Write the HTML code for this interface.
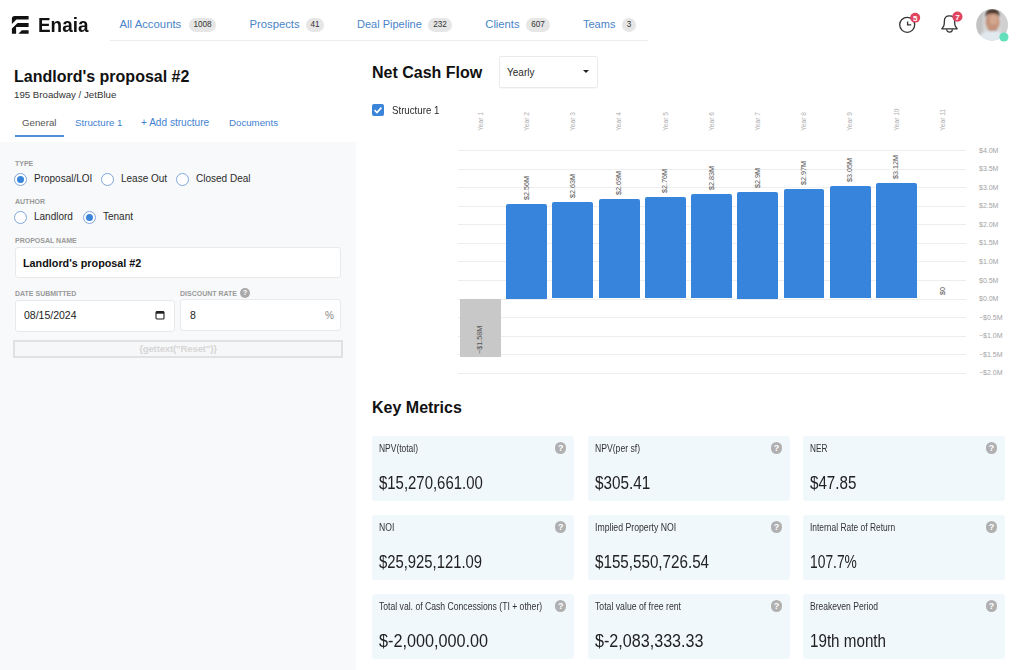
<!DOCTYPE html>
<html><head><meta charset="utf-8">
<style>
*{box-sizing:border-box;margin:0;padding:0}
html,body{width:1024px;height:670px;overflow:hidden;background:#fff;font-family:"Liberation Sans",sans-serif;color:#222}
.a{position:absolute;white-space:nowrap}
.nav{color:#4a84c9;font-size:11px;line-height:14px}
.badge{background:#e6e6e6;color:#333;font-size:8.2px;border-radius:7px;height:13.5px;line-height:13.5px;text-align:center;margin-top:1px}
.lp{position:absolute;left:0;top:142px;width:356px;height:528px;background:#f8f9fa}
.lbl{font-size:7px;font-weight:700;color:#999;line-height:8px;margin-top:1px}
.radio{position:absolute;width:13px;height:13px;border-radius:50%;border:1.2px solid #7ea8dc;background:#fff}
.radio.on::after{content:"";position:absolute;left:2px;top:2px;width:7px;height:7px;border-radius:50%;background:#3a84d9}
.rt{font-size:10px;color:#2a2a2a;line-height:12px}
.inp{position:absolute;background:#fff;border:1px solid #e8e9ea;border-radius:3px}
.card{position:absolute;background:#f0f8fc;border-radius:3px}
.card .l{position:absolute;left:6.6px;top:6.5px;font-size:10px;color:#333;transform:scaleX(0.86);transform-origin:0 0;line-height:12px}
.card .v{position:absolute;left:6.6px;top:37px;font-size:18px;color:#222;transform:scaleX(0.9);transform-origin:0 0;line-height:20px}
.card .q{position:absolute;right:7.5px;top:6px;width:11.5px;height:11.5px;border-radius:50%;background:#b0b0b0;color:#fff;font-size:9px;font-weight:700;text-align:center;line-height:12px}
.yl{position:absolute;font-size:7px;color:#a3a3a3;line-height:8px}
.grid{position:absolute;left:458px;width:508px;height:1px;background:#eeeeee}
.bar{position:absolute;background:#3684db;border-radius:2px 2px 0 0}
.nbar{position:absolute;background:#c8c8c8}
.rot{transform-origin:0 0;transform:rotate(-90deg)}
.vl{position:absolute;font-size:7.2px;color:#555;line-height:8px}
</style></head><body>
<!-- header -->
<svg class="a" style="left:0;top:0" width="40" height="40" viewBox="0 0 40 40">
  <path d="M11.9 18.6 Q11.9 15.9 14.6 15.9 H28.6 V19.6 H16.4 L11.9 24 Z" fill="#111"/>
  <path d="M17.6 22.9 H28.6 V26.9 H16.1 V33.7 H11.9 V28.6 Z" fill="#111"/>
  <path d="M21.9 30.2 H28.6 V33.7 H18.4 Z" fill="#111"/>
</svg>
<div class="a" style="left:38px;top:13px;font-size:20px;font-weight:700;color:#111;line-height:24px;transform:scaleX(0.945);transform-origin:0 0">Enaia</div>

<div class="a nav" style="left:119.5px;top:17px;font-size:11.35px">All Accounts</div>
<div class="a badge" style="left:189px;top:17px;width:27px">1008</div>
<div class="a nav" style="left:249.5px;top:17px;font-size:11.25px">Prospects</div>
<div class="a badge" style="left:306px;top:17px;width:18px">41</div>
<div class="a nav" style="left:357px;top:17px">Deal Pipeline</div>
<div class="a badge" style="left:428px;top:17px;width:24px">232</div>
<div class="a nav" style="left:485.3px;top:17px;font-size:11.2px">Clients</div>
<div class="a badge" style="left:526px;top:17px;width:24px">607</div>
<div class="a nav" style="left:583px;top:17px">Teams</div>
<div class="a badge" style="left:622px;top:17px;width:14px">3</div>
<div class="a" style="left:110px;top:40px;width:538px;height:1px;background:#ececec"></div>

<!-- left panel -->
<div class="lp"></div>
<div class="a" style="left:14px;top:68px;font-size:16px;font-weight:700;color:#111;line-height:18px">Landlord's proposal #2</div>
<div class="a" style="left:14px;top:88.5px;font-size:9.7px;color:#333;line-height:12px">195 Broadway / JetBlue</div>
<div class="a" style="left:22px;top:117px;font-size:9.7px;color:#555;line-height:12px">General</div>
<div class="a" style="left:75px;top:117px;font-size:9.7px;color:#3f82d0;line-height:12px">Structure 1</div>
<div class="a" style="left:141px;top:117px;font-size:10.1px;color:#3f82d0;line-height:12px">+ Add structure</div>
<div class="a" style="left:229px;top:117px;font-size:9.7px;color:#3f82d0;line-height:12px">Documents</div>
<div class="a" style="left:15px;top:135px;width:49px;height:2px;background:#4f8fda"></div>

<div class="a lbl" style="left:15px;top:159px">TYPE</div>
<div class="radio on" style="left:14px;top:173px"></div><div class="a rt" style="left:34px;top:173px">Proposal/LOI</div>
<div class="radio" style="left:101px;top:173px"></div><div class="a rt" style="left:121px;top:173px">Lease Out</div>
<div class="radio" style="left:176px;top:173px"></div><div class="a rt" style="left:196px;top:173px">Closed Deal</div>
<div class="a lbl" style="left:15px;top:197px">AUTHOR</div>
<div class="radio" style="left:14px;top:211px"></div><div class="a rt" style="left:34px;top:211px">Landlord</div>
<div class="radio on" style="left:83px;top:211px"></div><div class="a rt" style="left:103px;top:211px">Tenant</div>
<div class="a lbl" style="left:15px;top:236px">PROPOSAL NAME</div>
<div class="inp" style="left:15px;top:247px;width:326px;height:31px"></div>
<div class="a" style="left:23px;top:257px;font-size:10.8px;font-weight:700;color:#111;line-height:13px">Landlord's proposal #2</div>
<div class="a lbl" style="left:15px;top:289px">DATE SUBMITTED</div>
<div class="a lbl" style="left:180px;top:289px">DISCOUNT RATE</div>
<div class="inp" style="left:15px;top:300px;width:160px;height:32px"></div>
<div class="a" style="left:24px;top:309px;font-size:10.5px;color:#222;line-height:13px">08/15/2024</div>
<svg class="a" style="left:155px;top:310px" width="10" height="10" viewBox="0 0 10 10"><rect x="1" y="1.5" width="8" height="7.5" rx="1" fill="none" stroke="#222" stroke-width="1.1"/><rect x="1" y="1.5" width="8" height="2.2" fill="#222"/></svg>
<div class="a" style="left:240px;top:288px;width:10px;height:10px;border-radius:50%;background:#a9a9a9;color:#fff;font-size:7.5px;font-weight:700;text-align:center;line-height:10px">?</div>
<div class="inp" style="left:180px;top:299px;width:161px;height:32px"></div>
<div class="a" style="left:190px;top:309px;font-size:10.5px;color:#222;line-height:13px">8</div>
<div class="a" style="left:325px;top:309px;font-size:10px;color:#888;line-height:13px">%</div>
<div class="a" style="left:13px;top:340px;width:330px;height:18px;border:2px solid #dfe1e3;background:#f6f7f8;text-align:center;font-size:9.7px;font-weight:700;color:#d6d6d6;line-height:14px;letter-spacing:-0.2px">{gettext("Reset")}</div>

<!-- chart header -->
<div class="a" style="left:372px;top:63.7px;font-size:16px;font-weight:700;color:#111;line-height:18px">Net Cash Flow</div>
<div class="inp" style="left:499px;top:56px;width:99px;height:31.5px;border-color:#ebebeb;border-radius:2px;box-shadow:0 1px 1px rgba(0,0,0,0.03)"></div>
<div class="a" style="left:507px;top:66.5px;font-size:10px;color:#2a2a2a;line-height:12px">Yearly</div>
<div class="a" style="left:583px;top:70px;width:0;height:0;border-left:3px solid transparent;border-right:3px solid transparent;border-top:3.5px solid #222"></div>
<div class="a" style="left:372px;top:104px;width:12px;height:12px;background:#3a84d9;border-radius:2px"><svg width="12" height="12" viewBox="0 0 12 12" style="position:absolute;left:0;top:0"><path d="M2.6 6.2 L5 8.5 L9.4 3.6" fill="none" stroke="#fff" stroke-width="1.6"/></svg></div>
<div class="a" style="left:391.5px;top:104.5px;font-size:10.3px;color:#2a2a2a;line-height:12px;transform:scaleX(0.94);transform-origin:0 0">Structure 1</div>

<!-- chart -->
<div class="grid" style="top:150.0px"></div>
<div class="yl" style="left:979px;top:146.6px">$4.0M</div>
<div class="grid" style="top:168.6px"></div>
<div class="yl" style="left:979px;top:165.2px">$3.5M</div>
<div class="grid" style="top:187.1px"></div>
<div class="yl" style="left:979px;top:183.7px">$3.0M</div>
<div class="grid" style="top:205.7px"></div>
<div class="yl" style="left:979px;top:202.3px">$2.5M</div>
<div class="grid" style="top:224.3px"></div>
<div class="yl" style="left:979px;top:220.9px">$2.0M</div>
<div class="grid" style="top:242.8px"></div>
<div class="yl" style="left:979px;top:239.4px">$1.5M</div>
<div class="grid" style="top:261.4px"></div>
<div class="yl" style="left:979px;top:258.0px">$1.0M</div>
<div class="grid" style="top:279.9px"></div>
<div class="yl" style="left:979px;top:276.5px">$0.5M</div>
<div class="grid" style="top:298.5px"></div>
<div class="yl" style="left:979px;top:295.1px">$0.0M</div>
<div class="grid" style="top:317.1px"></div>
<div class="yl" style="left:979px;top:313.7px">−$0.5M</div>
<div class="grid" style="top:335.6px"></div>
<div class="yl" style="left:979px;top:332.2px">−$1.0M</div>
<div class="grid" style="top:354.2px"></div>
<div class="yl" style="left:979px;top:350.8px">−$1.5M</div>
<div class="grid" style="top:372.7px"></div>
<div class="yl" style="left:979px;top:369.3px">−$2.0M</div>
<div class="yl rot" style="left:476.6px;top:131.3px;font-size:6.6px;color:#adadad">Year 1</div>
<div class="nbar" style="left:460.0px;top:298.5px;width:40.9px;height:58.6px"></div>
<div class="vl rot" style="left:476.4px;top:354px">−$1.58M</div>
<div class="yl rot" style="left:522.9px;top:131.3px;font-size:6.6px;color:#adadad">Year 2</div>
<div class="bar" style="left:506.2px;top:204.0px;width:40.9px;height:94.5px"></div>
<div class="vl rot" style="left:522.7px;top:200.0px">$2.56M</div>
<div class="yl rot" style="left:569.1px;top:131.3px;font-size:6.6px;color:#adadad">Year 3</div>
<div class="bar" style="left:552.4px;top:201.6px;width:40.9px;height:96.9px"></div>
<div class="vl rot" style="left:568.9px;top:197.6px">$2.63M</div>
<div class="yl rot" style="left:615.3px;top:131.3px;font-size:6.6px;color:#adadad">Year 4</div>
<div class="bar" style="left:598.7px;top:199.1px;width:40.9px;height:99.4px"></div>
<div class="vl rot" style="left:615.1px;top:195.1px">$2.69M</div>
<div class="yl rot" style="left:661.5px;top:131.3px;font-size:6.6px;color:#adadad">Year 5</div>
<div class="bar" style="left:644.9px;top:196.6px;width:40.9px;height:101.9px"></div>
<div class="vl rot" style="left:661.3px;top:192.6px">$2.76M</div>
<div class="yl rot" style="left:707.8px;top:131.3px;font-size:6.6px;color:#adadad">Year 6</div>
<div class="bar" style="left:691.1px;top:193.9px;width:40.9px;height:104.6px"></div>
<div class="vl rot" style="left:707.6px;top:189.9px">$2.83M</div>
<div class="yl rot" style="left:754.0px;top:131.3px;font-size:6.6px;color:#adadad">Year 7</div>
<div class="bar" style="left:737.3px;top:191.5px;width:40.9px;height:107.0px"></div>
<div class="vl rot" style="left:753.8px;top:187.5px">$2.9M</div>
<div class="yl rot" style="left:800.2px;top:131.3px;font-size:6.6px;color:#adadad">Year 8</div>
<div class="bar" style="left:783.5px;top:188.8px;width:40.9px;height:109.7px"></div>
<div class="vl rot" style="left:800.0px;top:184.8px">$2.97M</div>
<div class="yl rot" style="left:846.4px;top:131.3px;font-size:6.6px;color:#adadad">Year 9</div>
<div class="bar" style="left:829.8px;top:186.1px;width:40.9px;height:112.4px"></div>
<div class="vl rot" style="left:846.2px;top:182.1px">$3.05M</div>
<div class="yl rot" style="left:892.6px;top:131.3px;font-size:6.6px;color:#adadad">Year 10</div>
<div class="bar" style="left:876.0px;top:183.3px;width:40.9px;height:115.2px"></div>
<div class="vl rot" style="left:892.4px;top:179.3px">$3.12M</div>
<div class="yl rot" style="left:938.9px;top:131.3px;font-size:6.6px;color:#adadad">Year 11</div>
<div class="vl rot" style="left:938.7px;top:295px">$0</div>

<!-- key metrics -->
<div class="a" style="left:372px;top:399px;font-size:16px;font-weight:700;color:#111;line-height:18px">Key Metrics</div>
<div class="card" style="left:372.2px;top:436.0px;width:201.8px;height:64.6px"><div class="l" style="transform:scaleX(0.846)">NPV(total)</div><div class="q">?</div><div class="v" style="transform:scaleX(0.829)">$15,270,661.00</div></div>
<div class="card" style="left:588.0px;top:436.0px;width:201.8px;height:64.6px"><div class="l" style="transform:scaleX(0.862)">NPV(per sf)</div><div class="q">?</div><div class="v" style="transform:scaleX(0.849)">$305.41</div></div>
<div class="card" style="left:803.0px;top:436.0px;width:201.8px;height:64.6px"><div class="l" style="transform:scaleX(0.825)">NER</div><div class="q">?</div><div class="v" style="transform:scaleX(0.842)">$47.85</div></div>
<div class="card" style="left:372.2px;top:515.2px;width:201.8px;height:64.6px"><div class="l" style="transform:scaleX(0.860)">NOI</div><div class="q">?</div><div class="v" style="transform:scaleX(0.824)">$25,925,121.09</div></div>
<div class="card" style="left:588.0px;top:515.2px;width:201.8px;height:64.6px"><div class="l" style="transform:scaleX(0.870)">Implied Property NOI</div><div class="q">?</div><div class="v" style="transform:scaleX(0.844)">$155,550,726.54</div></div>
<div class="card" style="left:803.0px;top:515.2px;width:201.8px;height:64.6px"><div class="l" style="transform:scaleX(0.843)">Internal Rate of Return</div><div class="q">?</div><div class="v" style="transform:scaleX(0.768)">107.7%</div></div>
<div class="card" style="left:372.2px;top:594.4px;width:201.8px;height:64.6px"><div class="l" style="transform:scaleX(0.862)">Total val. of Cash Concessions (TI + other)</div><div class="q">?</div><div class="v" style="transform:scaleX(0.900)">$-2,000,000.00</div></div>
<div class="card" style="left:588.0px;top:594.4px;width:201.8px;height:64.6px"><div class="l" style="transform:scaleX(0.869)">Total value of free rent</div><div class="q">?</div><div class="v" style="transform:scaleX(0.896)">$-2,083,333.33</div></div>
<div class="card" style="left:803.0px;top:594.4px;width:201.8px;height:64.6px"><div class="l" style="transform:scaleX(0.855)">Breakeven Period</div><div class="q">?</div><div class="v" style="transform:scaleX(0.844)">19th month</div></div>

<!-- icons -->
<svg class="a" style="left:880px;top:0px" width="144" height="50" viewBox="880 0 144 50">
  <defs>
    <filter id="bl" x="-20%" y="-20%" width="140%" height="140%"><feGaussianBlur stdDeviation="0.6"/></filter>
    <filter id="bl2" x="-20%" y="-20%" width="140%" height="140%"><feGaussianBlur stdDeviation="1.2"/></filter>
    <clipPath id="av"><circle cx="992.1" cy="24.9" r="15.8"/></clipPath>
    <radialGradient id="bg" cx="0.5" cy="0.4" r="0.6"><stop offset="0" stop-color="#e4e4e4"/><stop offset="1" stop-color="#c4c4c4"/></radialGradient>
  </defs>
  <!-- clock -->
  <circle cx="907.2" cy="24.8" r="7.5" fill="none" stroke="#333" stroke-width="1.3"/>
  <path d="M907.6 21.6 V24.8 H911.2" fill="none" stroke="#333" stroke-width="1.3"/>
  <circle cx="915.2" cy="17.8" r="5" fill="#e0445f"/>
  <text x="915.2" y="20.7" font-family="Liberation Sans" font-weight="700" font-size="8" fill="#fff" text-anchor="middle">5</text>
  <!-- bell -->
  <path d="M941.8 28.8 H957.2 L955.3 26.2 C954.7 24.6 954.6 22.5 954.6 20.8 C954.6 17.6 952.4 15.8 949.5 15.8 C946.6 15.8 944.4 17.6 944.4 20.8 C944.4 22.5 944.3 24.6 943.7 26.2 Z" fill="none" stroke="#333" stroke-width="1.3" stroke-linejoin="round"/>
  <path d="M946.6 29.2 A2.9 2.9 0 0 0 952.4 29.2" fill="none" stroke="#333" stroke-width="1.2"/>
  <circle cx="957.4" cy="16.6" r="5.1" fill="#e0445f"/>
  <text x="957.4" y="19.5" font-family="Liberation Sans" font-weight="700" font-size="8" fill="#fff" text-anchor="middle">7</text>
  <!-- avatar -->
  <g clip-path="url(#av)">
    <rect x="975" y="8" width="34" height="34" fill="#d6d6d6"/>
    <g filter="url(#bl2)">
      <rect x="975" y="8" width="8" height="34" fill="#c2c2c2"/>
      <rect x="1001" y="8" width="8" height="34" fill="#d0d0d0"/>
      <path d="M977 42 C979 33 985 30.5 992 30.5 C999 30.5 1005 33 1008 42 Z" fill="#e0e8f0"/>
      <rect x="988.5" y="26" width="8" height="5" fill="#a87a64"/>
      <ellipse cx="992.6" cy="21.8" rx="7.1" ry="9.2" fill="#c4937a"/>
      <ellipse cx="993.5" cy="20" rx="4" ry="5" fill="#d4a890"/>
      <path d="M985.3 17.5 C985 11 988.5 9.3 992.6 9.3 C996.8 9.3 1000.2 11 999.9 17.5 C998.5 14.2 995.5 13.3 992.6 13.3 C989.7 13.3 986.8 14.2 985.3 17.5Z" fill="#3e2a20"/>
    </g>
  </g>
  <circle cx="1003.9" cy="37" r="4.6" fill="#62e0bb"/>
</svg>
</body></html>
